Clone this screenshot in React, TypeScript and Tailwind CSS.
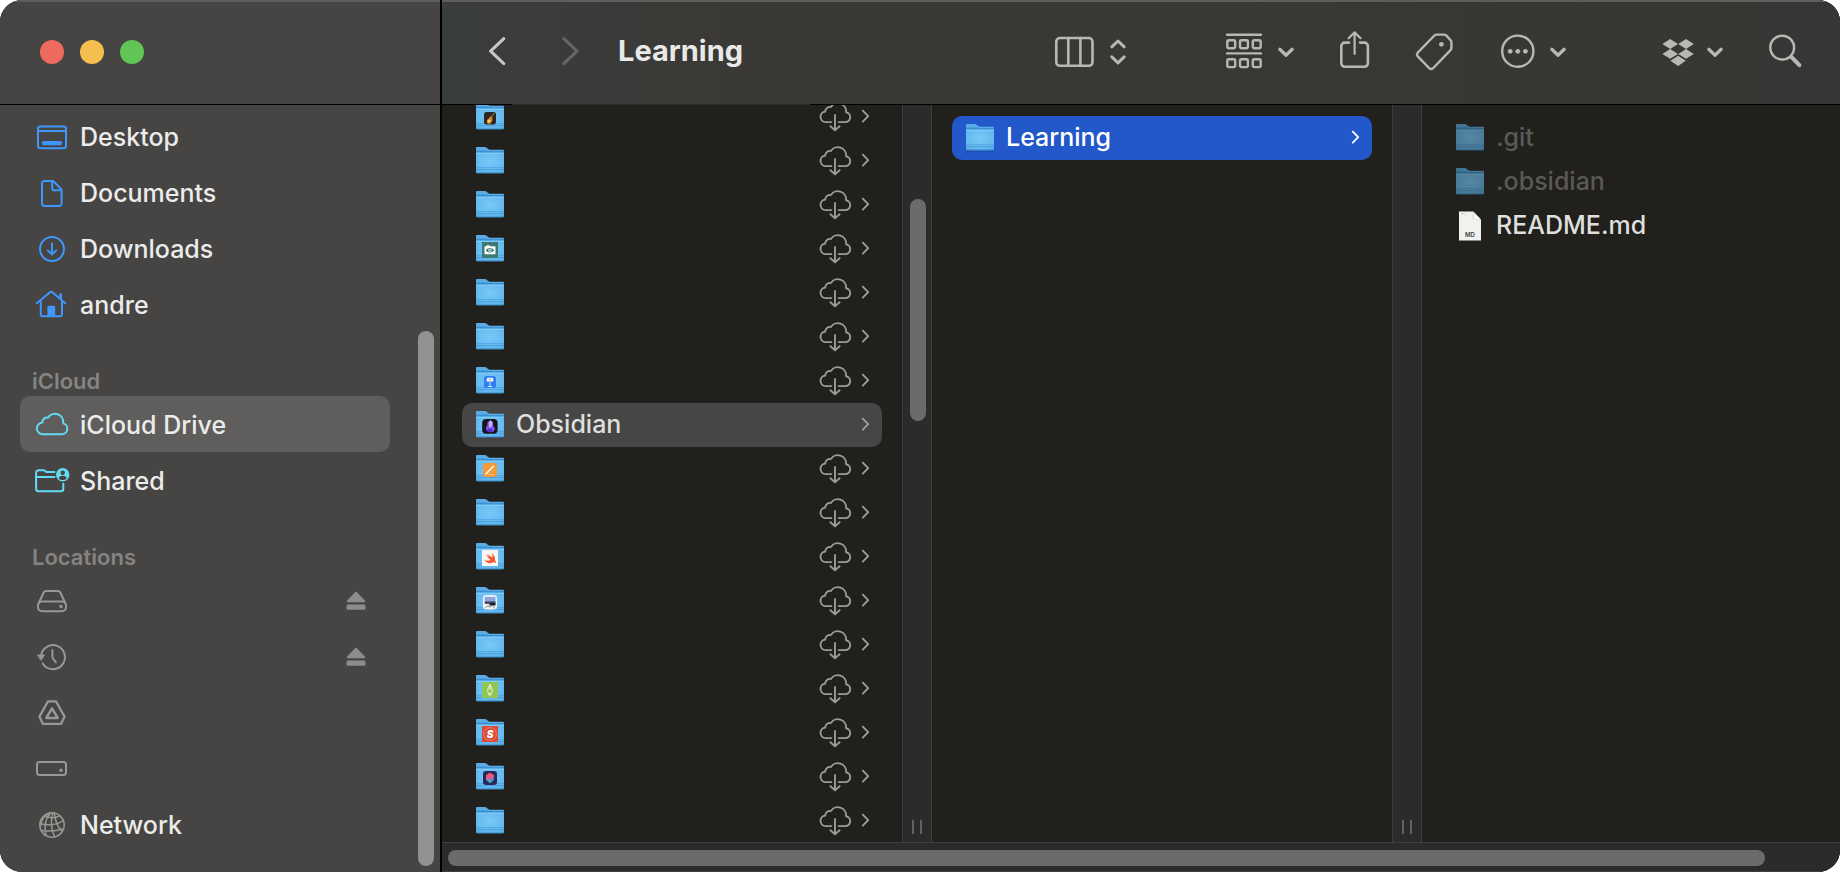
import { useId, type ReactNode } from "react";

/* ---------- Toolbar icons ---------- */

function ToolIcon({ width, children }: { width: number; children: ReactNode }) {
  return (
    <svg
      width={width}
      height={38}
      viewBox={`0 0 ${width} 38`}
      fill="none"
      stroke="currentColor"
      strokeWidth={2.6}
      strokeLinecap="round"
      strokeLinejoin="round"
      className="shrink-0 overflow-visible"
      aria-hidden="true"
    >
      {children}
    </svg>
  );
}

const DownChevron = () => (
  <ToolIcon width={16}>
    <path d="M1.8 17.3 8 23.2 14.2 17.3" strokeWidth={3.3} />
  </ToolIcon>
);

const ColumnsIcon = () => (
  <ToolIcon width={39}>
    <rect x={1.3} y={6} width={36.2} height={27.8} rx={3.6} />
    <path d="M13.3 6v27.8M25.4 6v27.8" />
  </ToolIcon>
);

const UpDownIcon = () => (
  <ToolIcon width={16}>
    <path d="M1.8 14.8 8 9l6.2 5.8M1.8 24.8 8 30.8l6.2-6" strokeWidth={3} />
  </ToolIcon>
);

const GroupIcon = () => (
  <ToolIcon width={36}>
    <path d="M1 2.7h34M1 21.4h34" strokeWidth={2.4} />
    {[8.3, 27.2].map((y) =>
      [1.3, 14, 26.8].map((x) => (
        <rect key={`${x}-${y}`} x={x} y={y} width={7.9} height={7.9} rx={1.6} strokeWidth={2.4} />
      )),
    )}
  </ToolIcon>
);

const ShareIcon = () => (
  <ToolIcon width={30}>
    <path d="M9 10.6H4.8A3.5 3.5 0 0 0 1.3 14v17.3a3.5 3.5 0 0 0 3.5 3.4h19.6a3.5 3.5 0 0 0 3.5-3.4V14a3.5 3.5 0 0 0-3.500-3.400h-4.300" />
    <path d="M14.6 22V1M8.600 6.200l6-5.800 6 5.800" strokeWidth={2.2} />
  </ToolIcon>
);

const TagIcon = () => (
  <ToolIcon width={39}>
    <path d="M20.6 2.6h7.6c.8 0 1.4.3 2 .8l4.3 4.7c.6.6.9 1.2.9 2v6c0 .9-.3 1.5-.9 2.1L17.3 36c-1.3 1.4-2.8 1.4-4.1.1L2 24.7c-1.4-1.4-1.4-2.900 0-4.300L18.400 3.500c.6-.6 1.3-.9 2.200-.9Z" strokeWidth={2.400} />
    <circle cx={25.4} cy={12.3} r={2.4} fill="currentColor" stroke="none" />
  </ToolIcon>
);

const MoreIcon = () => (
  <ToolIcon width={34}>
    <circle cx={16.8} cy={19.2} r={15.6} strokeWidth={2.4} />
    <g fill="currentColor" stroke="none">
      <circle cx={9.2} cy={19.3} r={2.4} />
      <circle cx={16.8} cy={19.3} r={2.4} />
      <circle cx={24.4} cy={19.3} r={2.4} />
    </g>
  </ToolIcon>
);

const DropboxIcon = () => (
  <ToolIcon width={32}>
    <g fill="currentColor" stroke="none">
      <path d="M7.2 6.9 15 11.9 7.2 16.9-.6 11.9ZM23 6.9l7.8 5-7.8 5-7.8-5ZM7.2 16.9l7.8 5-7.8 4.9-7.8-4.9ZM23 16.9l7.8 5-7.8 4.9-7.8-4.9ZM15.1 23.8l7.7 5-7.7 5.2-7.7-5.2Z" />
    </g>
  </ToolIcon>
);

const SearchIcon = () => (
  <ToolIcon width={33}>
    <circle cx={13.2} cy={15.6} r={11.9} strokeWidth={2.5} />
    <path d="m22.8 25.4 7.6 7.8" strokeWidth={4} />
  </ToolIcon>
);

/* ---------- Sidebar icons ---------- */

function SideIcon({ className, children }: { className: string; children: ReactNode }) {
  return (
    <svg
      width={36}
      height={32}
      viewBox="0 0 36 32"
      fill="none"
      stroke="currentColor"
      strokeWidth={2}
      strokeLinecap="round"
      strokeLinejoin="round"
      className={`shrink-0 ${className}`}
      aria-hidden="true"
    >
      {children}
    </svg>
  );
}

const BLUE = "text-[#3f97fd]";
const CYAN = "text-[#62dcf5]";
const GREY = "text-[#989795]";

const DesktopIcon = () => (
  <SideIcon className={BLUE}>
    <rect x={4} y={6.4} width={28} height={21.8} rx={2.4} />
    <path d="M4 11h28" />
    <rect x={8.2} y={21} width={19.6} height={4.2} rx={1} fill="currentColor" stroke="none" />
  </SideIcon>
);

const DocumentIcon = () => (
  <SideIcon className={BLUE}>
    <path d="M10.4 5h7.8c.7 0 1.2.2 1.7.7l7 7.1c.5.5.7 1 .7 1.7v13.1a2.4 2.4 0 0 1-2.4 2.4H10.4A2.4 2.4 0 0 1 8 27.6V7.4A2.4 2.4 0 0 1 10.4 5Z" />
    <path d="M18.2 5.5v7.2a1.5 1.5 0 0 0 1.5 1.5h7.3" />
  </SideIcon>
);

const DownloadIcon = () => (
  <SideIcon className={BLUE}>
    <circle cx={18} cy={17} r={12} />
    <path d="M18 11.4v11M13.8 18.4l4.2 4.2 4.2-4.2" />
  </SideIcon>
);

const HomeIcon = () => (
  <SideIcon className={BLUE}>
    <path d="M2.8 15.2 16 4.2c.8-.7 1.6-.7 2.4 0l12.9 11" />
    <path d="M6.8 13.5v13a1.8 1.8 0 0 0 1.8 1.7h17.6a1.8 1.8 0 0 0 1.8-1.7v-13" />
    <path d="M25.2 5.4h2.8v6.6l-2.8-2.4Z" fill="currentColor" stroke="none" />
    <path d="M13.4 28.6V19a1.2 1.2 0 0 1 1.2-1.2H20a1.2 1.2 0 0 1 1.2 1.2v9.6Z" fill="currentColor" stroke="none" />
  </SideIcon>
);

const CloudIcon = () => (
  <SideIcon className={CYAN}>
    <path d="M9 26.200H27.600A5.500 5.500 0 0 0 29.300 15.400 8.400 8.400 0 0 0 14 9.600 4.800 4.800 0 0 0 8.300 14.600 5.810 5.810 0 0 0 9 26.200Z" />
  </SideIcon>
);

const SharedIcon = () => (
  <SideIcon className={CYAN}>
    <path d="M20.5 8.1h-7.3c-.8 0-1.2-.3-1.8-.9-.7-.7-1.2-1-2.1-1H4.6A2.5 2.5 0 0 0 2.1 8.7v16a2.5 2.5 0 0 0 2.5 2.5h22.2a2.5 2.5 0 0 0 2.5-2.5V19.8" />
    <path d="M2.5 13h18" />
    <circle cx={28.7} cy={10.7} r={6.7} fill="currentColor" stroke="none" />
    <circle cx={28.7} cy={8.7} r={2.2} fill="#464543" stroke="none" />
    <path d="M24.7 14.4c.6-2 2-2.7 4-2.7s3.4.7 4 2.7c-1.1 1-2.5 1.5-4 1.5s-2.9-.5-4-1.5Z" fill="#464543" stroke="none" />
  </SideIcon>
);

const DiskIcon = () => (
  <SideIcon className={GREY}>
    <path d="M4.6 19.2 9.7 8.5c.5-1.1 1.2-1.5 2.4-1.5h11.8c1.2 0 1.9.4 2.4 1.5l5.1 10.7" />
    <rect x={4} y={17.6} width={28} height={9.6} rx={4} />
    <circle cx={27} cy={22.4} r={1.7} fill="currentColor" stroke="none" />
  </SideIcon>
);

const TimeMachineIcon = () => (
  <SideIcon className={GREY}>
    <path d="M7 16A12 12 0 1 1 8.7 23.4" />
    <path d="M3.6 15h7l-3.5 5.2Z" fill="currentColor" strokeWidth={0.8} />
    <path d="M18.4 10v7.6l3.5 4.8" />
  </SideIcon>
);

const DriveTriangleIcon = () => (
  <SideIcon className={GREY}>
    <path d="M14 5.4h8l8.6 15.2-3.6 7.3H9L5.4 20.6Z" strokeWidth={2.3} />
    <path d="m18 12.4 5.7 9.6H12.3Z" strokeWidth={2.5} />
  </SideIcon>
);

const ExternalDiskIcon = () => (
  <SideIcon className={GREY}>
    <rect x={3} y={10} width={29} height={13} rx={2.4} />
    <circle cx={27} cy={18.2} r={1.7} fill="currentColor" stroke="none" />
  </SideIcon>
);

const NetworkIcon = () => (
  <SideIcon className={GREY}>
    <g strokeWidth={1.5}>
      <circle cx={18} cy={17} r={12.2} />
      <path d="M10.3 7.7c4.8 2.6 10.6 2.6 15.6.2M6 15.5c7 2.3 17.5 1.6 23.2-3M7.5 22.500c6 .8 14.500 1 20.500-1.500" />
      <path d="M16.8 5c-5.3 5-7 12-5 22M19 5c-2.5 6-2.300 16 1.500 23.500M20.500 5.200c.5 7 3 13.500 7.300 17.800M15.500 5.200C10 8 7 12 6.300 18.500" />
    </g>
  </SideIcon>
);

const EjectIcon = () => (
  <svg width={20} height={22} viewBox="0 0 20 22" fill="currentColor" className="text-[#8d8c8a]" aria-hidden="true">
    <path d="M9 3.2c.7-.7 1.4-.7 2 0l8 8.6c.6.8.3 1.500-.6 1.500H1.600c-.9 0-1.200-.7-.6-1.500Z" />
    <rect x={0.6} y={15.6} width={18.8} height={5.2} rx={1.2} />
  </svg>
);

/* ---------- Folder and file icons ---------- */

type Badge =
  | "guitar"
  | "camera"
  | "keynote"
  | "obsidian"
  | "pages"
  | "swift"
  | "preview"
  | "pen"
  | "scribe"
  | "shortcuts";

const badges: Record<Badge, ReactNode> = {
  guitar: (
    <>
      <rect x={8} y={9} width={12} height={12.4} rx={2.6} fill="#2a2724" />
      <path d="m17.8 9.2.8.8-3.2 7-2-1Z" fill="#7a5a35" />
      <path d="M14.6 13.2c1.4.6 2.2 2.2 1.8 4-.4 2-2.2 3.9-3.9 3.7-1.7-.3-2.2-2-1.6-3.4.6-1.6 2-1.6 2.3-2.7Z" fill="#d9832a" />
      <circle cx={13} cy={18} r={1.5} fill="#f6d26b" />
    </>
  ),
  camera: (
    <>
      <rect x={6} y={7} width={16} height={16} fill="#3f7a72" />
      <path d="M9.3 11.2h1l.7-1h2.2l.6 1h4.9c.5 0 .8.3.8.8v6.4c0 .5-.3.8-.8.8H9.3c-.5 0-.8-.3-.8-.8V12c0-.5.3-.8.8-.8Z" fill="#fff" />
      <path d="M9.8 15.3c2-3.2 6.4-3.2 8.4 0-2 3-6.4 3-8.4 0Z" fill="#3f7a72" />
      <circle cx={14} cy={15.3} r={1.7} fill="#d7ebe7" />
      <circle cx={14} cy={15.3} r={0.8} fill="#2f5f58" />
    </>
  ),
  keynote: (
    <>
      <rect x={8} y={9} width={12} height={12} rx={2.6} fill="#2f7df3" />
      <path d="M11.2 10.8h5.6l.8 3.8h-7.2Z" fill="#f4f6fa" />
      <circle cx={14} cy={12.5} r={0.9} fill="#e0a040" />
      <path d="M13.5 14.6h1v4.6h-1ZM11.8 19h4.4v.9h-4.4Z" fill="#d5e4fb" />
    </>
  ),
  obsidian: (
    <>
      <rect x={6.2} y={8} width={15.4} height={14.8} rx={4} fill="#17151b" />
      <path d="m14.4 9.3 2.4 2 .3 3.2 2 3-1.7 3.4-3.2.4-3.6-1.4-.8-3.2 1.5-2.4.3-3.2Z" fill="#8056e8" />
      <path d="m14.4 9.3 2.4 2-.8 4-2.8 1.7-.5-5.2Z" fill="#c3b0fa" />
      <path d="m12.6 17.3 3.2 1 1.5 2.5-3.1.4-3.6-1.5Z" fill="#5a2fd0" />
    </>
  ),
  pages: (
    <>
      <rect x={7} y={8} width={14} height={14} rx={3.2} fill="#f59a35" />
      <path d="m10.2 18.6 7.2-7.3" stroke="#fff" strokeWidth={1.5} strokeLinecap="round" />
      <path d="M11.5 19.7h6.5" stroke="#fbd1a0" strokeWidth={0.7} />
    </>
  ),
  swift: (
    <>
      <rect x={6} y={7} width={16} height={16} fill="#fbf6f2" />
      <path d="M8.4 16.8c1.6 3.4 5.7 4.3 8.5 2.8 1-.6 2-.4 3.2.6 0-1.4-.5-2.4-1.2-3.2.6-2.6-.7-5-3.5-6.9 1.2 1.8 1.5 3.2 1.1 4.5-2-1.1-3.7-2.4-5.4-4.1.8 1.5 1.7 2.6 2.8 3.7-1.6-.9-2.9-1.9-4.2-3 1.2 2 2.9 4.1 5 5.8-2.1 1-4.4.9-6.3-.2Z" fill="#f1592f" />
    </>
  ),
  preview: (
    <>
      <rect x={7} y={8} width={14} height={14.4} rx={3.2} fill="#f2f3f5" />
      <rect x={8.7} y={9.8} width={10.8} height={5} fill="#8fa6de" />
      <rect x={8.7} y={14.4} width={10.8} height={2.4} fill="#39435a" />
      <path d="M13.5 16.2h6v2.3h-6Z" fill="#16181d" />
      <path d="M9.500 20.600 12 18.700l2 1.600 1.800-1.900 3.200 3" stroke="#7d8087" strokeWidth={1} fill="none" />
    </>
  ),
  pen: (
    <>
      <rect x={6} y={7} width={16} height={16} fill="#8fc655" />
      <path d="m14 9.3-2.6 6 1.2 3.2h2.8l1.2-3.2ZM14 10v5" stroke="#e8f5d6" strokeWidth={1} fill="none" strokeLinejoin="round" />
      <rect x={12.5} y={18.4} width={3} height={2.2} fill="#d8efba" />
    </>
  ),
  scribe: (
    <>
      <rect x={6} y={7} width={16} height={16} fill="#dc4a36" />
      <circle cx={14} cy={15} r={6.4} fill="none" stroke="#f0917f" strokeWidth={0.7} />
      <text x={14} y={18.6} textAnchor="middle" fontSize={10} fontWeight={900} fontStyle="italic" fill="#fff" fontFamily="Inter, sans-serif">
        S
      </text>
    </>
  ),
  shortcuts: (
    <>
      <rect x={7} y={8} width={14} height={14} rx={3.2} fill="#28285a" />
      <path d="m14 13.2 4 2.3v1.3L14 20.2l-4-3.4v-1.3Z" fill="#35b6c9" />
      <path d="m14 13.6 4-1v3.4l-4 1.8Z" fill="#6f6be8" />
      <path d="m14 9.6 4 2.6v1.4l-4 2.8-4-2.8v-1.4Z" fill="#ee5a74" />
      <path d="m10 13.2 4 2.9-2 1.7-2-1.5Z" fill="#d667a5" />
    </>
  ),
};

function FolderIcon({ badge, dimmed }: { badge?: Badge; dimmed?: boolean }) {
  const id = useId();
  return (
    <svg
      width={28}
      height={28}
      viewBox="0 0 28 28"
      className={dimmed ? "shrink-0 opacity-60" : "shrink-0"}
      aria-hidden="true"
    >
      <defs>
        <radialGradient id={id} cx="50%" cy="40%" r="75%">
          <stop offset="0" stopColor="#79c9f8" />
          <stop offset="0.6" stopColor="#68bbf1" />
          <stop offset="1" stopColor="#57abe4" />
        </radialGradient>
      </defs>
      <path d="M0 26.6h28v.6H0Z" fill="#000" opacity={0.3} />
      <path d="M0 1.2C0 .5.5 0 1.2 0h7.6c.9 0 1.5.3 2.1.9l1.3 1.2c.5.5 1 .7 1.7.7h12.9c.7 0 1.2.5 1.2 1.2V8H0Z" fill="#58aee6" />
      <path d="M0 3.6h11c1 0 1.4.3 2.2.3H28V8H0Z" fill="#3f8fd2" />
      <path d="M0 5.7h28V25c0 .7-.5 1.2-1.2 1.2H1.2C.5 26.2 0 25.7 0 25Z" fill={`url(#${id})`} />
      <path d="M0 5.7h28v1H0Z" fill="#86d4fb" />
      <path d="M0 20.4h28v.6H0ZM0 22.1h28v.6H0ZM0 25.2h28v.2c0 .5-.5.8-1.2.8H1.2C.5 26.2 0 25.9 0 25.4Z" fill="#4398d8" />
      {badge && badges[badge]}
    </svg>
  );
}

const MarkdownFileIcon = () => (
  <svg width={28} height={30} viewBox="0 0 28 30" className="shrink-0" aria-hidden="true">
    <path d="M3 .5h14.2L25 8.6v20.900H3Z" fill="#f1f1f0" />
    <path d="M17.2.5 25 8.600h-6.600c-.8 0-1.200-.4-1.200-1.200Z" fill="#cfcfce" />
    <path d="M18 1.600 24 7.900h-5.300c-.5 0-.7-.3-.7-.7Z" fill="#fff" />
    <path d="M5 2.700h4" stroke="#b9b9b8" strokeWidth={0.7} />
    <text x={14} y={26.3} textAnchor="middle" fontSize={6} fontWeight={600} fill="#3c3c3c" fontFamily="Inter, sans-serif">
      MD
    </text>
  </svg>
);

const CloudDownloadIcon = () => (
  <svg
    width={32}
    height={30}
    viewBox="0 0 32 30"
    fill="none"
    stroke="currentColor"
    strokeWidth={1.9}
    strokeLinecap="round"
    strokeLinejoin="round"
    className="shrink-0 text-[#9b9b99]"
    role="img"
    aria-label="In iCloud"
  >
    <path d="M12.400 20.100H6.600A5.320 5.320 0 0 1 6.200 9.500 4.700 4.700 0 0 1 11.900 5 8.300 8.300 0 0 1 27.100 10.300 4.940 4.940 0 0 1 26 20.100H19.600" />
    <path d="M16 13v14.800M11.400 24.200 16 28.200l4.600-4" />
  </svg>
);

const RowChevron = () => (
  <svg
    width={7}
    height={14}
    viewBox="0 0 7 14"
    fill="none"
    stroke="currentColor"
    strokeWidth={1.8}
    strokeLinecap="round"
    strokeLinejoin="round"
    className="shrink-0 overflow-visible"
    aria-hidden="true"
  >
    <path d="M.8.7 6.2 6.200.8 11.700" />
  </svg>
);

/* ---------- Sidebar ---------- */

type Place = { label: string; hidden?: boolean; icon: ReactNode; selected?: boolean; eject?: boolean };

const sections: { title?: string; places: Place[] }[] = [
  {
    places: [
      { label: "Desktop", icon: <DesktopIcon /> },
      { label: "Documents", icon: <DocumentIcon /> },
      { label: "Downloads", icon: <DownloadIcon /> },
      { label: "andre", icon: <HomeIcon /> },
    ],
  },
  {
    title: "iCloud",
    places: [
      { label: "iCloud Drive", icon: <CloudIcon />, selected: true },
      { label: "Shared", icon: <SharedIcon /> },
    ],
  },
  {
    title: "Locations",
    places: [
      { label: "Disk", hidden: true, icon: <DiskIcon />, eject: true },
      { label: "Time Machine", hidden: true, icon: <TimeMachineIcon />, eject: true },
      { label: "Cloud storage", hidden: true, icon: <DriveTriangleIcon /> },
      { label: "External disk", hidden: true, icon: <ExternalDiskIcon /> },
      { label: "Network", icon: <NetworkIcon /> },
    ],
  },
];

function SidebarRow({ place }: { place: Place }) {
  return (
    <li
      className={`flex h-14 items-center rounded-[10px] pr-6 pl-[14px] ${place.selected ? "bg-[#5f5e5c]" : ""}`}
    >
      <a
        href="#"
        aria-label={place.hidden ? place.label : undefined}
        className="flex min-w-0 flex-1 items-center gap-[10px]"
      >
        {place.icon}
        {!place.hidden && <span className="truncate pt-[2px]">{place.label}</span>}
      </a>
      {place.eject && (
        <button type="button" aria-label={`Eject ${place.label}`}>
          <EjectIcon />
        </button>
      )}
    </li>
  );
}

function Sidebar() {
  return (
    <aside className="flex w-[440px] shrink-0 flex-col bg-[#464543]">
      <div className="flex h-[105px] shrink-0 items-center gap-4 border-t-2 border-b border-t-[#5f5e5d] border-b-black pb-[3px] pl-10">
        <button type="button" aria-label="Close" className="size-6 rounded-full bg-[#ed6a5f]" />
        <button type="button" aria-label="Minimize" className="size-6 rounded-full bg-[#f5bf4f]" />
        <button type="button" aria-label="Zoom" className="size-6 rounded-full bg-[#61c554]" />
      </div>
      <div className="flex min-h-0 flex-1">
        <nav className="min-w-0 flex-1 overflow-hidden pt-[3px] pr-7 pl-5 text-[25px] leading-8 font-medium text-[#ececeb]">
          {sections.map((section, i) => (
            <section key={i}>
              {section.title && (
                <h2 className="flex h-16 items-end pb-px pl-3 text-[22px] leading-7 font-semibold text-[#858482]">
                  {section.title}
                </h2>
              )}
              <ul>
                {section.places.map((place) => (
                  <SidebarRow key={place.label} place={place} />
                ))}
              </ul>
            </section>
          ))}
        </nav>
        <div className="flex w-[22px] shrink-0 flex-col pt-[226px] pr-[6px] pb-[6px]">
          <div className="flex-1 rounded-full bg-[#939290]" />
        </div>
      </div>
    </aside>
  );
}

/* ---------- Toolbar ---------- */

function Toolbar() {
  return (
    <header className="flex h-[104px] shrink-0 items-center border-t-2 border-[#5f5e5d] bg-[#393735] bg-linear-to-r from-[#3a3d3d] via-[#3a3936] via-20% to-[#383634] pr-[38px] pb-1 pl-[47px] text-[#b8b7b5]">
      <nav className="flex shrink-0 gap-[57px]">
        <button type="button" aria-label="Back" className="text-[#c8c8c7]">
          <ToolIcon width={16}>
            <path d="M14.8 6.6 1.6 19.2 14.8 31.600" strokeWidth={3} />
          </ToolIcon>
        </button>
        <button type="button" aria-label="Forward" disabled className="text-[#676664]">
          <ToolIcon width={16}>
            <path d="M1.800 6.600 15 19.200 1.800 31.600" strokeWidth={3} />
          </ToolIcon>
        </button>
      </nav>
      <h1 className="ml-10 truncate text-[29px] leading-9 font-bold text-[#e9e9e8]">Learning</h1>
      <div className="ml-auto flex shrink-0 items-center gap-[46px]">
        <button type="button" aria-label="View" className="mr-[54px] flex gap-4">
          <ColumnsIcon />
          <UpDownIcon />
        </button>
        <button type="button" aria-label="Group" className="flex gap-4">
          <GroupIcon />
          <DownChevron />
        </button>
        <button type="button" aria-label="Share">
          <ShareIcon />
        </button>
        <button type="button" aria-label="Tags">
          <TagIcon />
        </button>
        <button type="button" aria-label="More" className="mr-[51px] flex gap-[15px]">
          <MoreIcon />
          <DownChevron />
        </button>
        <button type="button" aria-label="Dropbox" className="flex gap-3">
          <DropboxIcon />
          <DownChevron />
        </button>
        <button type="button" aria-label="Search">
          <SearchIcon />
        </button>
      </div>
    </header>
  );
}

/* ---------- Columns ---------- */

type Entry = { name?: string; badge?: Badge };

const cloudEntries: Entry[] = [
  { badge: "guitar" },
  {},
  {},
  { badge: "camera" },
  {},
  {},
  { badge: "keynote" },
  { name: "Obsidian", badge: "obsidian" },
  { badge: "pages" },
  {},
  { badge: "swift" },
  { badge: "preview" },
  {},
  { badge: "pen" },
  { badge: "scribe" },
  { badge: "shortcuts" },
  {},
];

function Row({ tone = "", icon, name, children }: { tone?: string; icon: ReactNode; name?: string; children?: ReactNode }) {
  return (
    <li>
      <a
        href="#"
        aria-label={name ? undefined : "Folder"}
        className={`flex h-11 items-center gap-3 rounded-[10px] pr-[13px] pl-[14px] ${tone}`}
      >
        {icon}
        <span className="min-w-0 flex-1 truncate pb-[2px]">{name}</span>
        {children}
      </a>
    </li>
  );
}

function ColumnGutter({ thumb }: { thumb?: boolean }) {
  return (
    <div className="flex w-[30px] shrink-0 flex-col items-center justify-between border-x border-[#3d3d3d] bg-[#2b2b2b] pb-2">
      <div className="flex w-full flex-1 justify-end pt-[94px] pr-[5px]">
        {thumb && <div className="h-[222px] w-4 rounded-full bg-[#6b6b6b]" />}
      </div>
      <div className="flex gap-[6px]">
        <div className="h-[14px] w-[2px] bg-[#636363]" />
        <div className="h-[14px] w-[2px] bg-[#636363]" />
      </div>
    </div>
  );
}

function Columns() {
  return (
    <div className="flex min-h-0 flex-1 text-[25px] leading-8 font-medium text-[#dfdfde]">
      <ul className="-mt-[10px] w-[460px] shrink-0 px-5">
        {cloudEntries.map((entry, i) => (
          <Row
            key={i}
            name={entry.name}
            icon={<FolderIcon badge={entry.badge} />}
            tone={entry.name ? "bg-[#464646]" : ""}
          >
            <span className="flex items-center gap-[11px] text-[#a09f9e]">
              {!entry.name && <CloudDownloadIcon />}
              <RowChevron />
            </span>
          </Row>
        ))}
      </ul>
      <ColumnGutter thumb />
      <ul className="w-[460px] shrink-0 px-5 pt-[11px]">
        <Row name="Learning" icon={<FolderIcon />} tone="bg-[#2258c9] text-white">
          <RowChevron />
        </Row>
      </ul>
      <ColumnGutter />
      <ul className="min-w-0 flex-1 px-5 pt-[11px]">
        <Row name=".git" icon={<FolderIcon dimmed />} tone="text-[#5a5957]" />
        <Row name=".obsidian" icon={<FolderIcon dimmed />} tone="text-[#5a5957]" />
        <Row name="README.md" icon={<MarkdownFileIcon />} />
      </ul>
    </div>
  );
}

export default function App() {
  return (
    <div className="h-screen bg-white font-['Inter',sans-serif]">
      <div className="flex h-full overflow-hidden rounded-[22px] bg-black">
        <Sidebar />
        <main className="ml-[2px] flex min-w-0 flex-1 flex-col bg-[#21201c]">
          <Toolbar />
          <div className="flex h-px shrink-0">
            <div className="w-[70px] bg-black" />
            <div className="w-[298px] bg-[#2b2a27]" />
            <div className="flex-1 bg-black" />
          </div>
          <div className="flex min-h-0 flex-1 flex-col overflow-hidden">
            <Columns />
          </div>
          <div className="flex h-[30px] shrink-0 items-center border-y border-[#3f3f3f] bg-[#2b2b2b] px-[6px] pt-px">
            <div className="h-4 w-[95%] rounded-full bg-[#6b6b6b]" />
          </div>
        </main>
      </div>
    </div>
  );
}
